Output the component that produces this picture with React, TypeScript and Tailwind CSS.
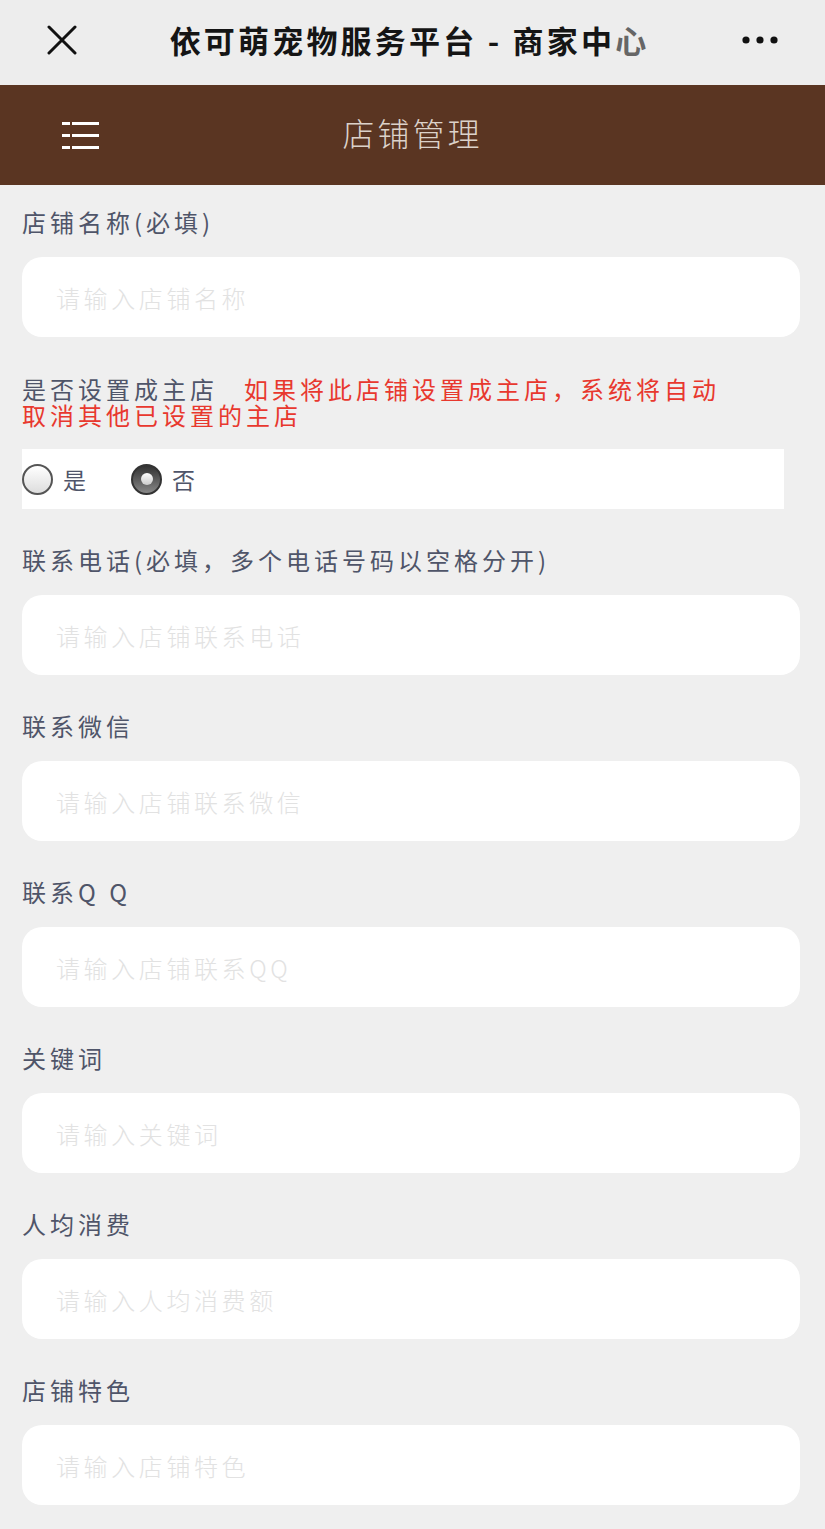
const font = "font-['Noto_Sans_CJK_SC','Noto_Sans',sans-serif]";

const fields = [
  { label: "联系电话(必填，多个电话号码以空格分开)", placeholder: "请输入店铺联系电话" },
  { label: "联系微信", placeholder: "请输入店铺联系微信" },
  { label: "联系Q Q", placeholder: "请输入店铺联系QQ" },
  { label: "关键词", placeholder: "请输入关键词" },
  { label: "人均消费", placeholder: "请输入人均消费额" },
  { label: "店铺特色", placeholder: "请输入店铺特色" },
];

function Field({ label, placeholder, first }: { label: string; placeholder: string; first?: boolean }) {
  return (
    <div className={first ? "pt-[17px]" : "pt-[31px]"}>
      <label className="block h-[40px] text-[24px] leading-[40px] tracking-[4px] text-[#4f5569]">{label}</label>
      <input
        placeholder={placeholder}
        className="mt-[15px] block h-[80px] w-[778px] rounded-[20px] bg-white px-[34px] text-[24px] font-light tracking-[3.6px] text-[#333] outline-none placeholder:text-[#e2e2e2]"
      />
    </div>
  );
}

function Radio({ checked }: { checked?: boolean }) {
  return checked ? (
    <span className="flex h-[31px] w-[31px] items-center justify-center rounded-full border-2 border-[#333] bg-gradient-to-b from-[#333] to-[#888]">
      <span className="h-[12px] w-[12px] rounded-full bg-gradient-to-b from-white to-[#ccc]" />
    </span>
  ) : (
    <span className="h-[31px] w-[31px] rounded-full border-2 border-[#555] bg-gradient-to-b from-white to-[#ddd]" />
  );
}

export default function App() {
  return (
    <div className={`min-h-screen w-[825px] bg-[#efefef] ${font}`}>
      <div className="flex h-[85px] items-center bg-[#ededed] px-[47px] pb-[5px]">
        <svg width="30" height="30" viewBox="0 0 30 30" className="shrink-0">
          <path d="M2 2L28 28M28 2L2 28" stroke="#111" strokeWidth="3" strokeLinecap="round" />
        </svg>
        <h1 className="flex-1 text-center text-[31px] font-bold tracking-[3.2px] text-[#151515]">
          依可萌宠物服务平台 - 商家中<span className="text-[#666]">心</span>
        </h1>
        <svg width="36" height="10" viewBox="0 0 36 10" className="shrink-0">
          <circle cx="4" cy="5" r="3.6" fill="#111" />
          <circle cx="18" cy="5" r="3.6" fill="#111" />
          <circle cx="32" cy="5" r="3.6" fill="#111" />
        </svg>
      </div>

      <div className="relative flex h-[100px] items-center justify-center bg-[#5a3522] pb-[6px]">
        <svg width="37" height="28" viewBox="0 0 37 28" className="absolute left-[62px] top-[36px]">
          <rect x="0" y="1" width="8" height="3" fill="#fff" />
          <rect x="10" y="1" width="27" height="3" fill="#fff" />
          <rect x="0" y="13" width="8" height="3" fill="#fff" />
          <rect x="10" y="13" width="27" height="3" fill="#fff" />
          <rect x="0" y="25" width="8" height="3" fill="#fff" />
          <rect x="10" y="25" width="27" height="3" fill="#fff" />
        </svg>
        <span className="text-[32px] font-light tracking-[3px] text-[#dcd2ca]">店铺管理</span>
      </div>

      <div className="pl-[22px] pr-[25px] pb-[24px]">
        <Field label="店铺名称(必填)" placeholder="请输入店铺名称" first />

        <div className="pt-[39px]">
          <p className="text-[24px] leading-[26px] tracking-[4px] text-[#4f5569]">
            是否设置成主店
            <span className="ml-[26px] text-[#e8382e]">
              如果将此店铺设置成主店，系统将自动
              <br />
              取消其他已设置的主店
            </span>
          </p>
          <div className="mt-[21px] flex h-[60px] w-[762px] items-center bg-white">
            <label className="flex items-center">
              <Radio />
              <span className="ml-[10px] text-[23px] text-[#4f5569]">是</span>
            </label>
            <label className="ml-[45px] flex items-center">
              <Radio checked />
              <span className="ml-[10px] text-[23px] text-[#4f5569]">否</span>
            </label>
          </div>
        </div>

        {fields.map((f) => (
          <Field key={f.label} label={f.label} placeholder={f.placeholder} />
        ))}
      </div>
    </div>
  );
}
